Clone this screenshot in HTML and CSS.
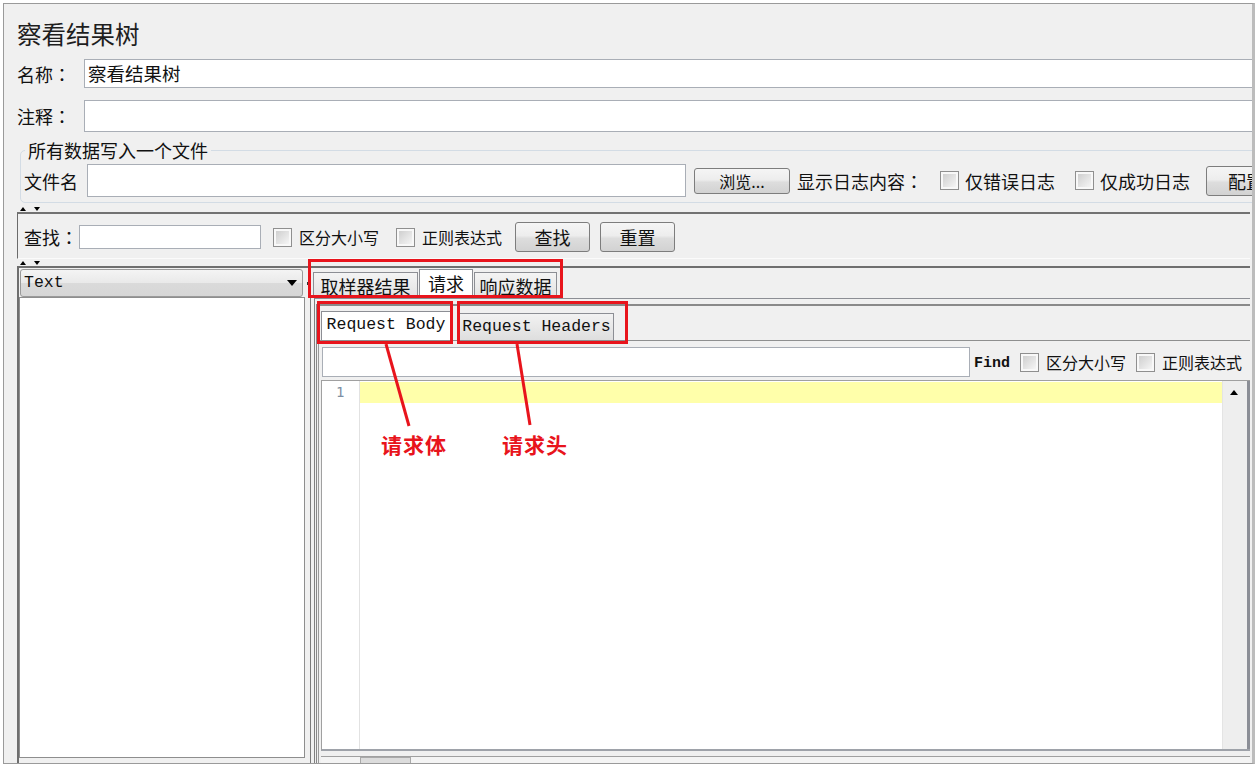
FILE: index.html
```html
<!DOCTYPE html>
<html lang="zh-CN">
<head>
<meta charset="utf-8">
<title>察看结果树</title>
<link rel="stylesheet" href="styles.css">
</head>
<body>
<div class="frame">
  <div class="title">察看结果树</div>

  <div class="form-row name-row">
    <span class="form-label">名称<span class="colon" lang="zh-TW">：</span></span>
    <div class="field field-name">察看结果树</div>
  </div>
  <div class="form-row comment-row">
    <span class="form-label">注释<span class="colon" lang="zh-TW">：</span></span>
    <div class="field"></div>
  </div>

  <div class="file-box">
    <span class="legend">所有数据写入一个文件</span>
    <div class="file-row">
      <span class="file-label">文件名</span>
      <div class="field file-field"></div>
      <button type="button" class="btn btn-browse">浏览...</button>
      <span class="log-label">显示日志内容<span class="colon" lang="zh-TW">：</span></span>
      <span class="check check-first"></span><span class="check-text">仅错误日志</span>
      <span class="check check-next"></span><span class="check-text">仅成功日志</span>
      <button type="button" class="btn btn-config">配置</button>
    </div>
  </div>

  <div class="split-h split-top"><i class="arrow-up"></i><i class="arrow-down"></i></div>

  <div class="search-panel">
    <span class="search-label">查找<span class="colon" lang="zh-TW">：</span></span>
    <div class="field search-field"></div>
    <span class="check sc-case"></span><span class="small-text">区分大小写</span>
    <span class="check sc-regex"></span><span class="small-text">正则表达式</span>
    <button type="button" class="btn btn-find">查找</button>
    <button type="button" class="btn btn-reset">重置</button>
  </div>

  <div class="split-h split-mid"><i class="arrow-up"></i><i class="arrow-down"></i></div>

  <div class="results">
    <div class="left-pane">
      <div class="combo"><span class="combo-text">Text</span><i class="combo-arrow"></i></div>
      <div class="tree-list"></div>
    </div>
    <div class="split-v"><i class="split-dot"></i></div>
    <div class="right-pane">
      <div class="tab-strip">
        <span class="tab tab-sampler">取样器结果</span>
        <span class="tab tab-request tab-active">请求</span>
        <span class="tab tab-response">响应数据</span>
      </div>
      <div class="tab-body">
        <div class="inner">
          <div class="subtab-strip">
            <span class="subtab subtab-body-tab subtab-active">Request Body</span>
            <span class="subtab subtab-headers-tab">Request Headers</span>
          </div>
          <div class="subtab-body">
            <div class="find-row">
              <div class="field find-field"></div>
              <span class="find-label">Find</span>
              <span class="check fc-case"></span><span class="small-text">区分大小写</span>
              <span class="check fc-regex"></span><span class="small-text">正则表达式</span>
            </div>
            <div class="editor">
              <div class="gutter"><span class="line-no">1</span></div>
              <div class="code"><div class="current-line"></div></div>
              <div class="vscroll"><i class="scroll-up"></i></div>
            </div>
            <div class="hscroll"><div class="htrack"><span class="hthumb"></span></div></div>
          </div>
        </div>
      </div>
    </div>
  </div>
</div>

<svg class="callouts" width="1256" height="767" viewBox="0 0 1256 767">
  <g fill="none" stroke="#e8141c" stroke-width="3">
    <rect x="309.5" y="260.5" width="252" height="36"/>
    <rect x="318.5" y="302.5" width="133" height="40"/>
    <rect x="458.5" y="302.5" width="168" height="40"/>
    <line x1="386" y1="344" x2="409" y2="426"/>
    <line x1="517" y1="344" x2="530" y2="425"/>
  </g>
</svg>
<span class="callout-label label-body">请求体</span>
<span class="callout-label label-headers">请求头</span>
</body>
</html>
```

FILE: styles.css
```css
* {
  box-sizing: border-box;
  margin: 0;
  padding: 0;
}

html,
body {
  background: #ffffff;
}

body {
  width: 1256px;
  height: 767px;
  overflow: hidden;
  padding: 3px 0 0 3px;
  font-family: "Noto Sans CJK SC", "Noto Sans", sans-serif;
  color: #111111;
}

/* full-width colon centred in its cell */
.colon {
  font-family: "Noto Sans CJK TC", "Noto Sans CJK SC", sans-serif;
}

/* window frame */
.frame {
  width: 1252px;
  height: 761px;
  background: #f0f0f0;
  border: 1px solid #9a9a9a;
  border-right: 3px solid #bcbcbc;
  overflow: hidden;
  padding: 0 2px 0 13px;
  display: flex;
  flex-direction: column;
}

.title {
  margin-top: 15px;
  height: 30px;
  line-height: 30px;
  font-size: 24.5px;
  color: #1e1e1e;
  flex: none;
}

/* text fields */
.field {
  background: #ffffff;
  border: 1px solid #a9aeb6;
  flex: none;
}

.form-row {
  display: flex;
  align-items: center;
  margin-right: -8px;
  flex: none;
}

.name-row {
  margin-top: 10px;
  height: 29px;
}

.comment-row {
  margin-top: 12px;
  height: 32px;
}

.form-label {
  width: 67px;
  flex: none;
  font-size: 18px;
  line-height: 22px;
  white-space: nowrap;
}

.form-row .field {
  flex: 1;
  height: 100%;
}

.field-name {
  font-size: 18.5px;
  line-height: 27px;
  padding-left: 3px;
}

/* titled border group */
.file-box {
  flex: none;
  margin: 18px -10px 0 3px;
  border: 1px solid #d3dce5;
  border-radius: 5px;
  padding: 0 0 5px 3px;
}

.legend {
  display: block;
  width: max-content;
  margin: -12px 0 0 1px;
  padding: 0 3px;
  background: #f0f0f0;
  font-size: 18px;
  line-height: 22px;
}

.file-row {
  display: flex;
  align-items: center;
  height: 33px;
  margin-top: 3px;
}

.file-label {
  width: 63px;
  flex: none;
  font-size: 18px;
  line-height: 22px;
}

.file-field {
  width: 599px;
  height: 33px;
}

.log-label {
  margin-left: 7px;
  font-size: 18px;
  line-height: 22px;
  white-space: nowrap;
}

.check-text {
  margin-left: 6px;
  font-size: 18px;
  line-height: 22px;
  white-space: nowrap;
}

.check-first {
  margin-left: 17px;
}

.check-next {
  margin-left: 20px;
}

/* buttons */
.btn {
  flex: none;
  display: flex;
  align-items: center;
  justify-content: center;
  font-family: inherit;
  font-size: 17px;
  color: #111111;
  border: 1px solid #7d7d7d;
  border-radius: 3px;
  background: linear-gradient(#f5f5f5, #ededed 45%, #dddddd 55%, #d2d2d2);
  white-space: nowrap;
}

.btn-browse {
  margin-left: 8px;
  width: 96px;
  height: 26px;
  font-size: 16px;
}

.btn-config {
  margin-left: 16px;
  width: 80px;
  height: 30px;
  font-size: 18px;
}

.btn-find {
  margin-left: 13px;
  width: 75px;
  height: 30px;
  font-size: 18px;
}

.btn-reset {
  margin-left: 10px;
  width: 75px;
  height: 30px;
  font-size: 18px;
}

/* check boxes */
.check {
  flex: none;
  width: 19px;
  height: 19px;
  border: 1px solid #8f8f8f;
  padding: 2px;
  background: linear-gradient(135deg, #cfcfcf, #f5f5f5) content-box, #f8f8f8;
}

.small-text {
  margin-left: 7px;
  font-size: 16px;
  line-height: 20px;
  white-space: nowrap;
}

/* one-touch split dividers */
.split-h {
  flex: none;
  display: flex;
  align-items: flex-end;
  gap: 8px;
  padding-left: 3px;
}

.split-top {
  height: 9px;
  padding-bottom: 1px;
}

.split-mid {
  height: 7px;
  padding-bottom: 1px;
}

.arrow-up {
  width: 0;
  height: 0;
  border-left: 3px solid transparent;
  border-right: 3px solid transparent;
  border-bottom: 4px solid #000000;
}

.arrow-down {
  width: 0;
  height: 0;
  border-left: 3px solid transparent;
  border-right: 3px solid transparent;
  border-top: 4px solid #000000;
}

/* search bar */
.search-panel {
  flex: none;
  display: flex;
  align-items: center;
  height: 47px;
  border-top: 2px solid #727272;
  border-left: 1px solid #6b6b6b;
  border-bottom: 1px solid #fbfbfb;
  padding: 8px 0 6px 6px;
}

.search-label {
  width: 55px;
  flex: none;
  font-size: 18px;
  line-height: 22px;
  white-space: nowrap;
}

.search-field {
  width: 182px;
  height: 24px;
}

.sc-case {
  margin-left: 12px;
}

.sc-regex {
  margin-left: 17px;
}

/* results split pane */
.results {
  flex: 1;
  min-height: 0;
  display: flex;
  border-top: 2px solid #6e6e6e;
}

.left-pane {
  width: 290px;
  flex: none;
  display: flex;
  flex-direction: column;
  border-left: 2px solid #6e6e6e;
  padding: 1px 2px 5px 0;
}

.combo {
  flex: none;
  height: 28px;
  width: 283px;
  margin-left: 1px;
  display: flex;
  align-items: center;
  justify-content: space-between;
  padding: 0 5px 0 3px;
  border: 1px solid #9a9a9a;
  border-radius: 3px;
  background: linear-gradient(#f4f4f4, #e9e9e9 50%, #dadada 51%, #d6d6d6);
}

.combo-text {
  font-family: "Liberation Mono", "DejaVu Sans Mono", monospace;
  font-size: 16.5px;
  line-height: 20px;
}

.combo-arrow {
  width: 0;
  height: 0;
  border-left: 5px solid transparent;
  border-right: 5px solid transparent;
  border-top: 6px solid #000000;
}

.tree-list {
  flex: 1;
  background: #ffffff;
  border: 1px solid #8e8e8e;
}

.split-v {
  width: 3px;
  flex: none;
  position: relative;
}

.split-dot {
  position: absolute;
  left: 0;
  top: 14px;
  width: 2px;
  height: 3px;
  background: #333333;
}

.right-pane {
  flex: 1;
  min-width: 0;
  display: flex;
  flex-direction: column;
  border-left: 1px solid #7a7a7a;
}

/* outer tabs */
.tab-strip {
  flex: none;
  height: 30px;
  display: flex;
  align-items: flex-end;
  gap: 1px;
  padding-left: 2px;
}

.tab {
  height: 26px;
  display: flex;
  align-items: center;
  justify-content: center;
  font-size: 18px;
  line-height: 22px;
  border: 1px solid #8c8e94;
  border-bottom: 0;
  background: linear-gradient(#f4f4f4, #e2e2e2);
  white-space: nowrap;
}

.tab-sampler {
  width: 105px;
}

.tab-request {
  width: 54px;
}

.tab-response {
  width: 83px;
}

.tab-active {
  height: 29px;
  background: #ffffff;
  padding-bottom: 3px;
}

.tab-body {
  flex: 1;
  min-height: 0;
  display: flex;
  flex-direction: column;
  margin-left: 3px;
  border-top: 1px solid #8c8e94;
  border-left: 1px solid #7f7f7f;
  padding: 5px 0 0 1px;
}

.inner {
  flex: 1;
  min-height: 0;
  display: flex;
  flex-direction: column;
  border-top: 2px solid #8a8a8a;
  border-left: 1px solid #888888;
  padding-left: 1px;
}

/* inner tabs */
.subtab-strip {
  flex: none;
  height: 34px;
  display: flex;
  align-items: flex-end;
  padding-left: 3px;
}

.subtab {
  height: 27px;
  display: flex;
  align-items: center;
  justify-content: center;
  font-family: "Liberation Mono", "DejaVu Sans Mono", monospace;
  font-size: 16.5px;
  line-height: 20px;
  border: 1px solid #8c8e94;
  border-bottom: 0;
  background: linear-gradient(#f2f2f2, #dedede);
  white-space: nowrap;
}

.subtab-body-tab {
  width: 130px;
}

.subtab-headers-tab {
  width: 155px;
  margin-left: 8px;
}

.subtab-active {
  height: 29px;
  background: #ffffff;
  padding-bottom: 2px;
}

.subtab-body {
  flex: 1;
  min-height: 0;
  display: flex;
  flex-direction: column;
  border-top: 1px solid #8e8f8f;
  border-left: 1px solid #9a9a9a;
  padding: 6px 0 0 2px;
}

.find-row {
  flex: none;
  height: 30px;
  display: flex;
  align-items: center;
  margin-bottom: 3px;
}

.find-field {
  width: 648px;
  height: 30px;
  margin-left: 1px;
}

.find-label {
  margin-left: 4px;
  padding-top: 3px;
  font-family: "Liberation Mono", "DejaVu Sans Mono", monospace;
  font-size: 15px;
  font-weight: 700;
  line-height: 18px;
}

.fc-case {
  margin-left: 10px;
}

.fc-regex {
  margin-left: 10px;
}

/* text editor */
.editor {
  flex: 1;
  min-height: 0;
  display: flex;
  border-top: 1px solid #a0a0a0;
  border-left: 1px solid #a0a0a0;
  border-bottom: 2px solid #9ea2a9;
}

.gutter {
  width: 38px;
  flex: none;
  background: #ffffff;
  border-right: 1px solid #e2e2e2;
  padding: 1px 0 0 14px;
}

.line-no {
  display: block;
  font-family: "DejaVu Sans Mono", monospace;
  font-size: 14px;
  line-height: 21px;
  color: #7d8fa3;
}

.code {
  flex: 1;
  background: #ffffff;
  padding-top: 1px;
}

.current-line {
  height: 21px;
  background: #ffffaa;
}

.vscroll {
  width: 28px;
  flex: none;
  background: #eeeeee;
  border-left: 1px solid #e4e4e4;
  border-right: 3px solid #8b8e96;
  padding: 9px 0 0 7px;
}

.scroll-up {
  display: block;
  width: 0;
  height: 0;
  border-left: 4px solid transparent;
  border-right: 4px solid transparent;
  border-bottom: 5px solid #000000;
}

.hscroll {
  flex: none;
  height: 12px;
  padding-top: 5px;
}

.htrack {
  height: 7px;
  border-top: 1px solid #a0a0a0;
  background: #f4f4f4;
  padding-left: 39px;
}

.hthumb {
  display: block;
  width: 51px;
  height: 6px;
  background: #dcdcdc;
  border: 1px solid #a9a9a9;
  border-bottom: 0;
}

/* red callouts drawn over the window */
.callouts {
  position: absolute;
  left: 0;
  top: 0;
  pointer-events: none;
}

.callout-label {
  position: absolute;
  font-size: 21px;
  font-weight: 700;
  line-height: 24px;
  letter-spacing: 1px;
  color: #e8141c;
}

.label-body {
  left: 381px;
  top: 432px;
}

.label-headers {
  left: 502px;
  top: 432px;
}
```
